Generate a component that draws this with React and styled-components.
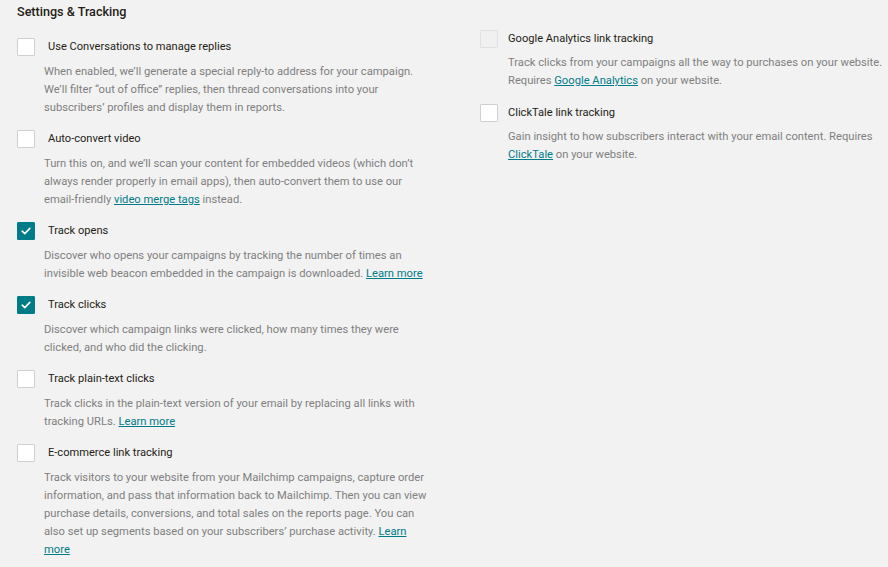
import React from "react";
import styled, { createGlobalStyle } from "styled-components";

const Global = createGlobalStyle`
  html, body { margin: 0; padding: 0; background: #f2f2f2; }
  body { font-family: Roboto, "Liberation Sans", Arial, sans-serif; -webkit-font-smoothing: antialiased; }
`;

const Page = styled.div`
  width: 888px;
  height: 567px;
  box-sizing: border-box;
  padding: 0 0 0 17px;
  overflow: hidden;
`;

const Heading = styled.h2`
  margin: 0;
  height: 24px;
  line-height: 24px;
  font-size: 12.6px;
  font-weight: 500;
  color: #241c15;
`;

const Columns = styled.div`
  display: grid;
  grid-template-columns: 463px 1fr;
  align-items: start;
`;

const Column = styled.div`
  display: flex;
  flex-direction: column;
  gap: ${(p) => p.$gap}px;
  padding-top: ${(p) => p.$top}px;
`;

const Option = styled.div`
  display: flex;
  flex-direction: column;
  gap: ${(p) => p.$inner}px;
`;

const Row = styled.label`
  display: flex;
  align-items: center;
  gap: ${(p) => p.$gap}px;
  height: 18px;
`;

const Box = styled.span`
  flex: none;
  width: 18px;
  height: 18px;
  box-sizing: border-box;
  border-radius: 1px;
  display: flex;
  align-items: center;
  justify-content: center;
  background: ${(p) => (p.$checked ? "#007c89" : p.$disabled ? "#f0f0f0" : "#ffffff")};
  border: 1px solid ${(p) => (p.$checked ? "#007c89" : p.$disabled ? "#e0e0e0" : "#cfcfcf")};
`;

const LabelText = styled.span`
  font-size: 11.1px;
  color: #241c15;
  line-height: 18px;
`;

const Desc = styled.p`
  margin: 0;
  padding-left: ${(p) => p.$indent}px;
  width: ${(p) => p.$width}px;
  font-size: 11.2px;
  line-height: 18px;
  color: #7f7f7f;
`;

const Link = styled.a`
  color: #007c89;
  text-decoration: underline;
`;

const Check = () => (
  <svg width="10" height="8" viewBox="0 0 10 8" fill="none">
    <path d="M1.2 4.2 L3.8 6.6 L8.8 1.4" stroke="#fff" strokeWidth="1.6" strokeLinecap="round" strokeLinejoin="round" />
  </svg>
);

const Item = ({ label, checked, disabled, children, side }) => {
  const left = side === "left";
  return (
    <Option $inner={left ? 7 : 6}>
      <Row $gap={left ? 13 : 10}>
        <Box $checked={checked} $disabled={disabled}>{checked && <Check />}</Box>
        <LabelText>{label}</LabelText>
      </Row>
      <Desc $indent={left ? 27 : 28} $width={left ? 384 : 376}>{children}</Desc>
    </Option>
  );
};

export default function App() {
  return (
    <Page>
      <Global />
      <Heading>Settings &amp; Tracking</Heading>
      <Columns>
        <Column $top={14} $gap={13}>
          <Item side="left" label="Use Conversations to manage replies">
            When enabled, we’ll generate a special reply-to address for your campaign. We’ll filter “out of office” replies, then thread conversations into your subscribers’ profiles and display them in reports.
          </Item>
          <Item side="left" label="Auto-convert video">
            Turn this on, and we’ll scan your content for embedded videos (which don’t always render properly in email apps), then auto-convert them to use our email-friendly <Link>video merge tags</Link> instead.
          </Item>
          <Item side="left" label="Track opens" checked>
            Discover who opens your campaigns by tracking the number of times an invisible web beacon embedded in the campaign is downloaded. <Link>Learn more</Link>
          </Item>
          <Item side="left" label="Track clicks" checked>
            Discover which campaign links were clicked, how many times they were clicked, and who did the clicking.
          </Item>
          <Item side="left" label="Track plain-text clicks">
            Track clicks in the plain-text version of your email by replacing all links with tracking URLs. <Link>Learn more</Link>
          </Item>
          <Item side="left" label="E-commerce link tracking">
            Track visitors to your website from your Mailchimp campaigns, capture order information, and pass that information back to Mailchimp. Then you can view purchase details, conversions, and total sales on the reports page. You can also set up segments based on your subscribers’ purchase activity. <Link>Learn more</Link>
          </Item>
        </Column>
        <Column $top={6} $gap={14}>
          <Item side="right" label="Google Analytics link tracking" disabled>
            Track clicks from your campaigns all the way to purchases on your website. Requires <Link>Google Analytics</Link> on your website.
          </Item>
          <Item side="right" label="ClickTale link tracking">
            Gain insight to how subscribers interact with your email content. Requires <Link>ClickTale</Link> on your website.
          </Item>
        </Column>
      </Columns>
    </Page>
  );
}
